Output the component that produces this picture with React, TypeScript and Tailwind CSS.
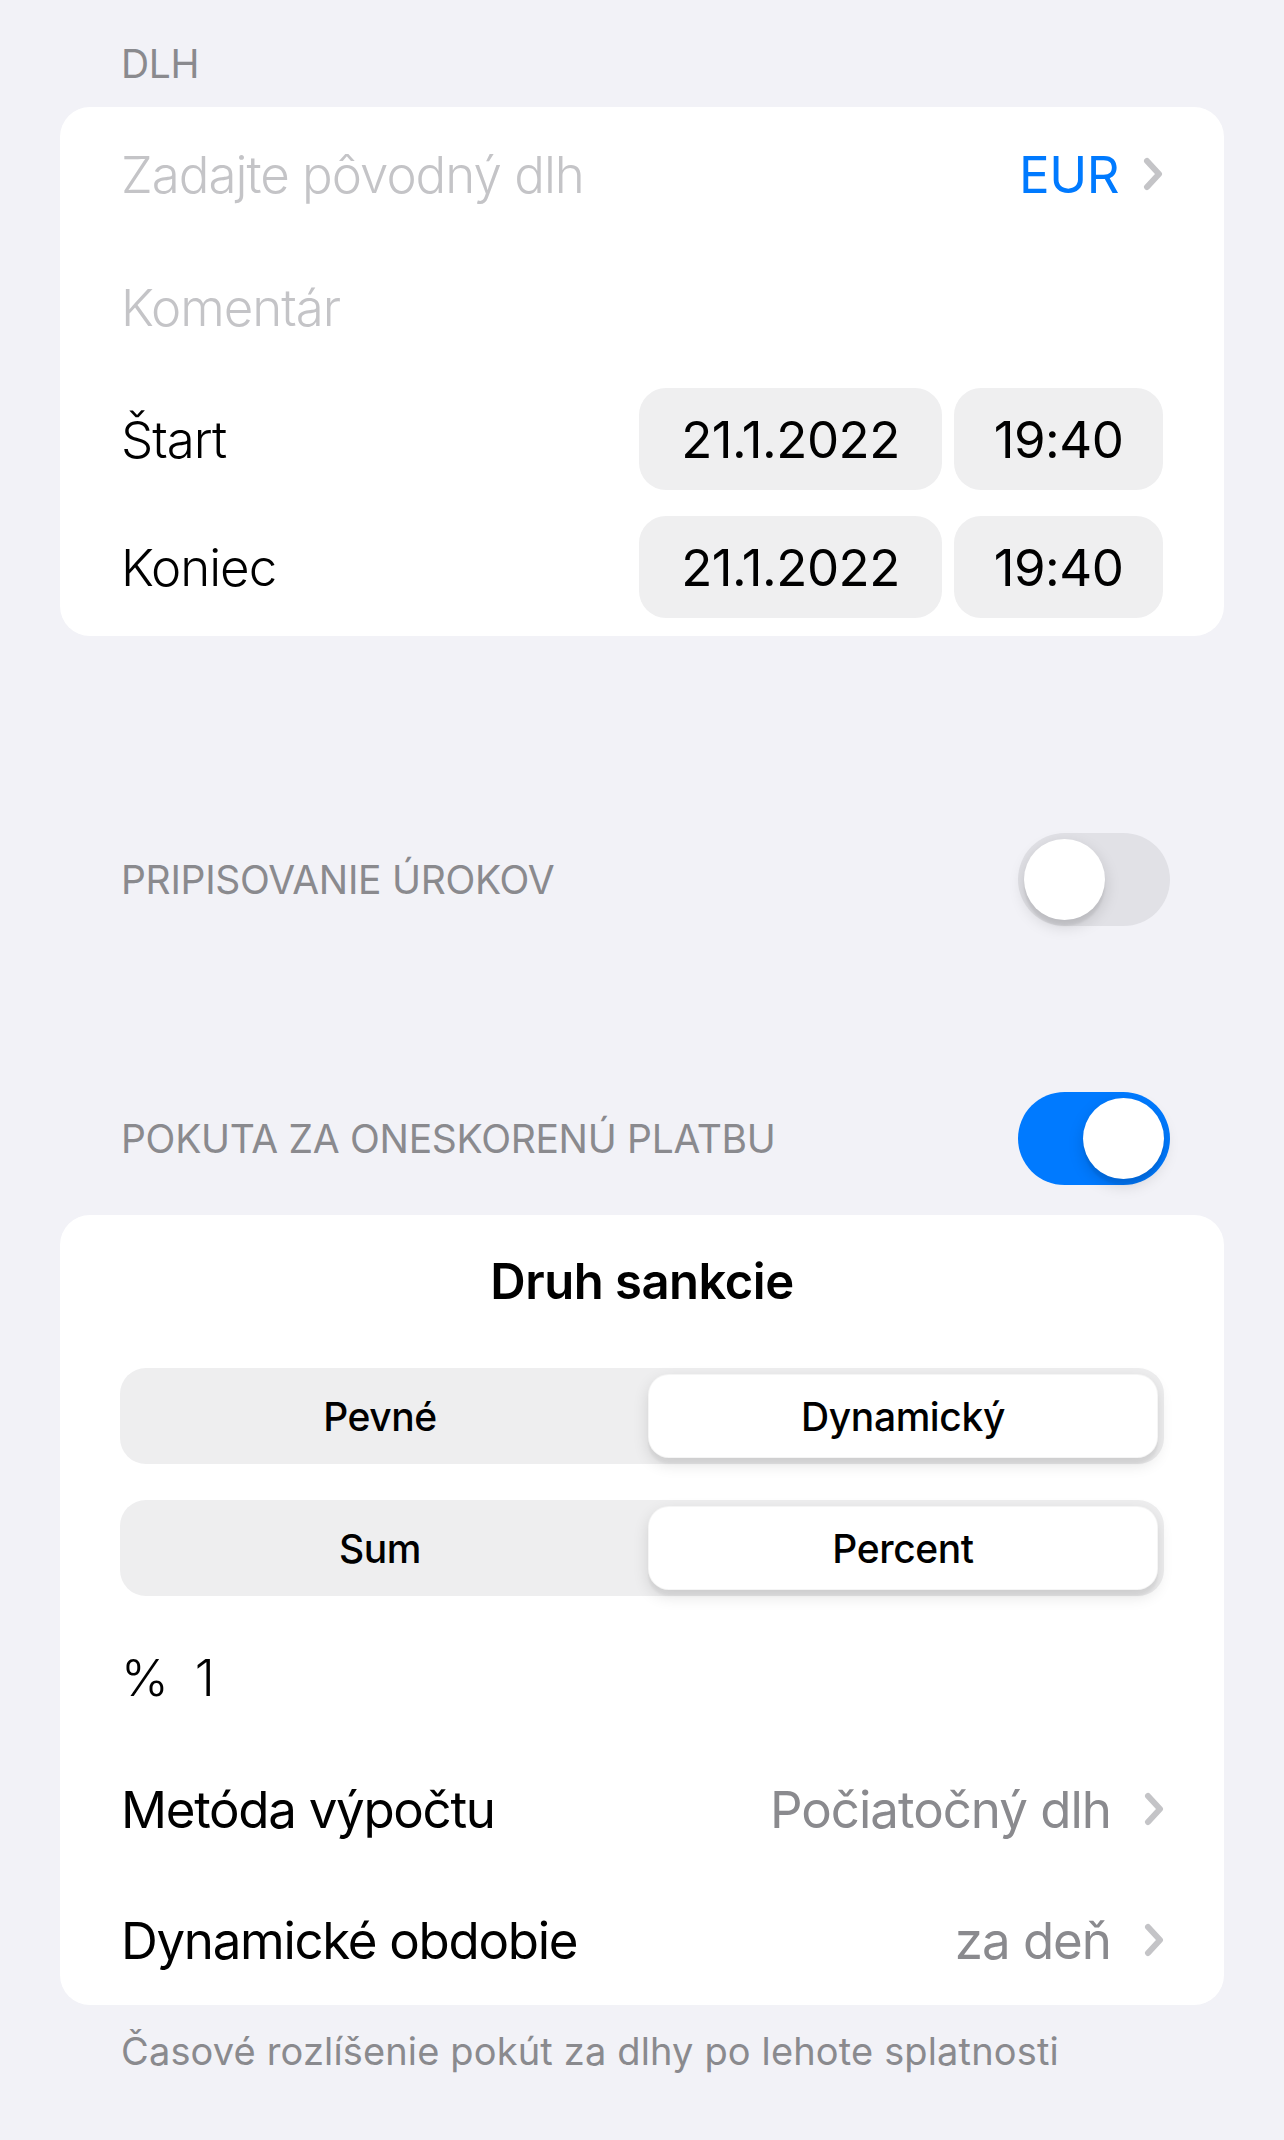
import { useState } from "react";

function Chevron() {
  return (
    <svg width="20" height="34" viewBox="0 0 20 34" aria-hidden className="shrink-0">
      <path
        d="M4 4 L16 17 L4 30"
        fill="none"
        stroke="#c4c4c7"
        strokeWidth="6"
        strokeLinecap="round"
        strokeLinejoin="round"
      />
    </svg>
  );
}

function Toggle({ on, onChange }: { on: boolean; onChange: (v: boolean) => void }) {
  return (
    <button
      role="switch"
      aria-checked={on}
      onClick={() => onChange(!on)}
      className={
        "flex h-[93px] w-[152px] shrink-0 items-center rounded-full p-[6px] transition-colors " +
        (on ? "justify-end bg-[#007aff]" : "justify-start bg-[#e1e1e6]")
      }
    >
      <span className="block h-[81px] w-[81px] rounded-full bg-white shadow-[0_6px_16px_rgba(0,0,0,0.15),0_6px_2px_rgba(0,0,0,0.06)]" />
    </button>
  );
}

function Segmented({
  options,
  value,
  onChange,
}: {
  options: string[];
  value: number;
  onChange: (i: number) => void;
}) {
  return (
    <div className="flex h-[96px] gap-[14px] rounded-[26px] bg-[#eeeeef] p-[6px]">
      {options.map((o, i) => (
        <button
          key={o}
          onClick={() => onChange(i)}
          className={
            "flex-1 rounded-[21px] text-[39px] font-medium tracking-[-0.4px] text-black " +
            (i === value
              ? "border border-black/[0.04] bg-white shadow-[0_6px_16px_rgba(0,0,0,0.12),0_6px_2px_rgba(0,0,0,0.04)]"
              : "")
          }
        >
          {o}
        </button>
      ))}
    </div>
  );
}

function DateRow({ label, last }: { label: string; last?: boolean }) {
  return (
    <div className={"flex items-center justify-between " + (last ? "h-[124px]" : "h-[132px]")}>
      <span className="text-[51px] font-light tracking-[-1px] text-black">{label}</span>
      <div className="flex gap-[12px]">
        <span className="flex h-[102px] w-[303px] items-center justify-center rounded-[27px] bg-[#efeff0] text-[51px] tracking-[-0.5px] text-black">
          21.1.2022
        </span>
        <span className="flex h-[102px] w-[209px] items-center justify-center rounded-[27px] bg-[#efeff0] text-[51px] tracking-[-0.5px] text-black">
          19:40
        </span>
      </div>
    </div>
  );
}

export default function App() {
  const [interest, setInterest] = useState(false);
  const [penalty, setPenalty] = useState(true);
  const [kind, setKind] = useState(1);
  const [unit, setUnit] = useState(1);

  return (
    <div className="min-h-[2140px] w-full bg-[#f2f2f7] px-[60px] pt-[40px] font-['Inter',sans-serif] leading-none antialiased">
      {/* Dlh */}
      <div className="flex h-[46px] items-center pl-[61px] text-[39px] tracking-[-0.3px] text-[#8a8a8e]">
        DLH
      </div>
      <div className="mt-[21px] rounded-[30px] bg-white px-[61px] pb-[7px]">
        <div className="flex h-[134px] items-center justify-between">
          <span className="text-[51px] font-light tracking-[-1px] text-[#c4c4c7]">Zadajte pôvodný dlh</span>
          <span className="flex items-center gap-[24px] text-[51px] tracking-[-0.5px] text-[#007aff]">
            EUR
            <Chevron />
          </span>
        </div>
        <div className="flex h-[132px] items-center">
          <span className="text-[51px] font-light tracking-[-1px] text-[#c4c4c7]">Komentár</span>
        </div>
        <DateRow label="Štart" />
        <DateRow label="Koniec" last />
      </div>

      {/* Pripisovanie */}
      <div className="mt-[197px] flex items-center justify-between pl-[61px] pr-[54px]">
        <span className="text-[39px] tracking-[-0.3px] text-[#8a8a8e]">PRIPISOVANIE ÚROKOV</span>
        <Toggle on={interest} onChange={setInterest} />
      </div>

      {/* Pokuta */}
      <div className="mt-[166px] flex items-center justify-between pl-[61px] pr-[54px]">
        <span className="text-[39px] tracking-[-0.3px] text-[#8a8a8e]">POKUTA ZA ONESKORENÚ PLATBU</span>
        <Toggle on={penalty} onChange={setPenalty} />
      </div>

      <div className="mt-[30px] rounded-[30px] bg-white px-[60px]">
        <div className="pt-[37px] text-center text-[49px] font-semibold leading-[60px] tracking-[-0.5px] text-black">
          Druh sankcie
        </div>
        <div className="mt-[56px]">
          <Segmented options={["Pevné", "Dynamický"]} value={kind} onChange={setKind} />
        </div>
        <div className="mt-[36px]">
          <Segmented options={["Sum", "Percent"]} value={unit} onChange={setUnit} />
        </div>
        <div className="mt-[15px] flex h-[132px] items-center gap-[26px] pl-[1px] text-[51px] font-light text-black">
          <span>%</span>
          <span>1</span>
        </div>
        <div className="flex h-[132px] items-center justify-between pl-[1px]">
          <span className="text-[51px] tracking-[-1.3px] text-black">Metóda výpočtu</span>
          <span className="flex items-center gap-[33px] text-[51px] tracking-[-1px] text-[#8a8a8e]">
            Počiatočný dlh
            <Chevron />
          </span>
        </div>
        <div className="flex h-[130px] items-center justify-between pl-[1px]">
          <span className="text-[51px] tracking-[-1.3px] text-black">Dynamické obdobie</span>
          <span className="flex items-center gap-[33px] text-[51px] tracking-[-1px] text-[#8a8a8e]">
            za deň
            <Chevron />
          </span>
        </div>
      </div>

      <p className="mt-[23px] pl-[61px] text-[38px] leading-[46px] tracking-[0.15px] text-[#8a8a8e]">
        Časové rozlíšenie pokút za dlhy po lehote splatnosti
      </p>
    </div>
  );
}
